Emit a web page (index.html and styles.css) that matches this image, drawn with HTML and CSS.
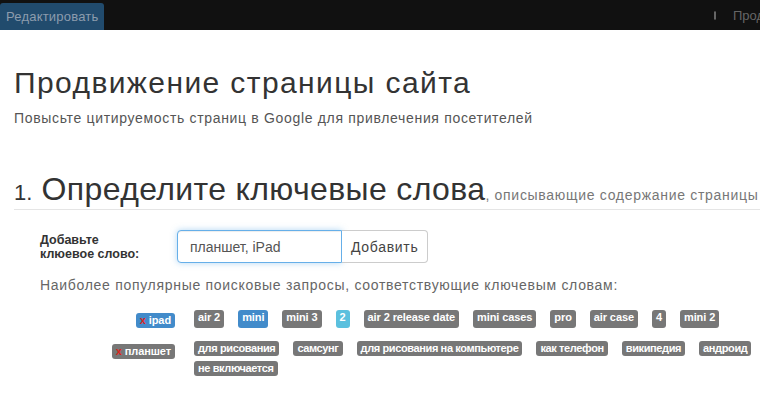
FILE: index.html
```html
<!DOCTYPE html>
<html lang="ru">
<head>
<meta charset="utf-8">
<link rel="stylesheet" href="styles.css">
</head>
<body>
<div class="topbar">
  <a class="edit-btn">Редактировать</a>
  <div class="topbar-right">
    <span class="phone-icon"></span>
    <span class="topbar-text">Продвижение</span>
  </div>
</div>
<div class="page">
  <header class="page-header">
    <h1>Продвижение страницы сайта</h1>
    <p class="lead">Повысьте цитируемость страниц в Google для привлечения посетителей</p>
  </header>
  <section class="step">
    <h2><span class="num">1.</span> Определите ключевые слова<small>, описывающие содержание страницы</small></h2>
    <form class="add-form">
      <label class="add-label">Добавьте<br>клюевое слово:</label>
      <div class="input-group">
        <input class="kw-input" type="text" value="планшет, iPad">
        <button type="button" class="add-btn">Добавить</button>
      </div>
    </form>
    <p class="hint">Наиболее популярные поисковые запросы, соответствующие ключевым словам:</p>
    <div class="kw-rows">
      <div class="kw-row">
        <div class="kw-key"><span class="tag tag-primary"><span class="x">x</span> ipad</span></div>
        <div class="kw-list">
          <span class="tag">air 2</span>
          <span class="tag tag-primary">mini</span>
          <span class="tag">mini 3</span>
          <span class="tag tag-info">2</span>
          <span class="tag">air 2 release date</span>
          <span class="tag">mini cases</span>
          <span class="tag">pro</span>
          <span class="tag">air case</span>
          <span class="tag">4</span>
          <span class="tag">mini 2</span>
        </div>
      </div>
      <div class="kw-row kw-row-ru">
        <div class="kw-key"><span class="tag"><span class="x">x</span> планшет</span></div>
        <div class="kw-list">
          <span class="tag">для рисования</span>
          <span class="tag">самсунг</span>
          <span class="tag">для рисования на компьютере</span>
          <span class="tag">как телефон</span>
          <span class="tag">википедия</span>
          <span class="tag">андроид</span>
          <span class="tag">не включается</span>
        </div>
      </div>
    </div>
  </section>
</div>
</body>
</html>
```
FILE: styles.css
```css
html, body {
  margin: 0;
  padding: 0;
  background: #fff;
  font-family: "Liberation Sans", Arial, sans-serif;
  color: #333;
  overflow: hidden;
}
.topbar {
  height: 30px;
  background: #111;
  display: flex;
  align-items: flex-end;
  justify-content: space-between;
}
.edit-btn {
  display: block;
  height: 27px;
  line-height: 27px;
  padding: 0 6px;
  background: #214b6d;
  color: #8c9cad;
  font-size: 13px;
  letter-spacing: 0.2px;
  border-radius: 3px 3px 0 0;
}
.topbar-right {
  display: flex;
  align-items: center;
  height: 30px;
  white-space: nowrap;
  width: 46px;
  overflow: hidden;
}
.phone-icon {
  width: 5px;
  height: 7px;
  border: 1px solid #666;
  border-radius: 1px;
  margin-right: 17px;
  background: #2a2a2a;
}
.topbar-text {
  color: #666;
  font-size: 13px;
}
.page {
  padding: 0 0 0 14px;
}
.page-header {
  padding-top: 37px;
  padding-bottom: 20px;
}
h1 {
  margin: 0;
  font-size: 30px;
  font-weight: normal;
  letter-spacing: 1.4px;
  color: #333;
  line-height: 32px;
}
.lead {
  margin: 11px 0 0;
  font-size: 14px;
  letter-spacing: 0.67px;
  color: #555;
}
.step h2 {
  margin: 29px 0 0;
  font-weight: normal;
  font-size: 32px;
  letter-spacing: 0.36px;
  line-height: 28px;
  padding-bottom: 0;
  border-bottom: 1px solid #e5e5e5;
  white-space: nowrap;
  color: #333;
}
.step h2 .num {
  font-size: 22px;
  letter-spacing: 0;
}
.step h2 small {
  font-size: 14px;
  color: #777;
  letter-spacing: 0.7px;
}
.add-form {
  display: flex;
  align-items: center;
  margin: 20px 0 0 26px;
}
.add-label {
  width: 137px;
  font-size: 12.5px;
  font-weight: bold;
  line-height: 14px;
  color: #333;
}
.input-group {
  display: flex;
}
.kw-input {
  width: 165px;
  height: 33px;
  box-sizing: border-box;
  border: 1px solid #66afe9;
  border-radius: 4px 0 0 4px;
  box-shadow: inset 0 1px 1px rgba(0,0,0,.075), 0 0 6px rgba(102,175,233,.5);
  padding: 0 12px;
  font-family: "Liberation Sans", Arial, sans-serif;
  font-size: 14px;
  color: #555;
  outline: none;
}
.add-btn {
  height: 33px;
  box-sizing: border-box;
  border: 1px solid #ccc;
  border-left: none;
  border-radius: 0 4px 4px 0;
  background: #fff;
  color: #444;
  padding: 0 9px;
  font-family: "Liberation Sans", Arial, sans-serif;
  font-size: 14px;
  letter-spacing: 0.7px;
}
.hint {
  margin: 14px 0 0 26px;
  font-size: 14px;
  letter-spacing: 0.7px;
  color: #666;
}
.kw-rows {
  margin-top: 17px;
}
.kw-row {
  display: flex;
  margin-bottom: 13px;
}
.kw-key {
  width: 161px;
  text-align: right;
  flex: none;
}
.kw-list {
  display: flex;
  flex-wrap: wrap;
  column-gap: 14px;
  row-gap: 5px;
  margin-left: 19px;
  width: 572px;
  flex: none;
}
.tag {
  display: inline-block;
  background: #777;
  color: #fff;
  font-size: 11px;
  font-weight: bold;
  line-height: 11px;
  letter-spacing: -0.1px;
  padding: 2px 4px 2px;
  border-radius: 3px;
  white-space: nowrap;
}
.kw-row-ru .kw-list .tag {
  letter-spacing: -0.38px;
}
.tag-primary { background: #428bca; }
.tag-info { background: #5bc0de; }
.x { color: #d9261c; }
```
